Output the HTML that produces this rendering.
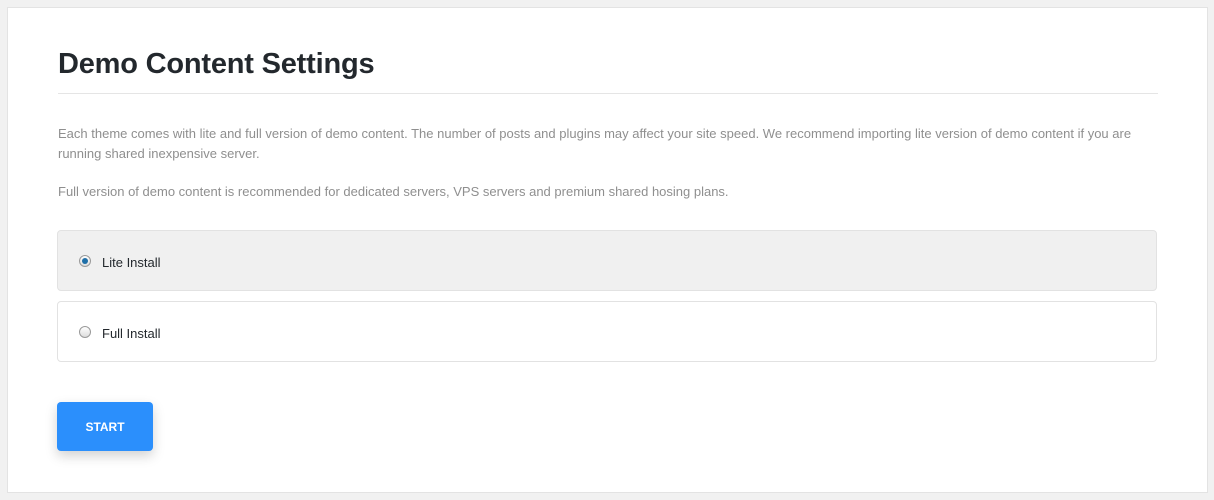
<!DOCTYPE html>
<html><head><style>
*{box-sizing:border-box;margin:0;padding:0}
body{width:1214px;height:500px;background:#f1f1f1;font-family:"Liberation Sans",sans-serif;position:relative;overflow:hidden}
.card{position:absolute;left:7px;top:7px;width:1201px;height:486px;background:#fff;border:1px solid #e3e3e3}
h1{position:absolute;left:50px;top:40px;font-size:29px;font-weight:bold;color:#23282d;letter-spacing:-0.2px}
.hr{position:absolute;left:50px;top:85px;width:1100px;height:1px;background:#e5e5e5}
p{position:absolute;left:50px;font-size:13px;color:#8f8f8f;line-height:20px;width:1100px}
.opt{position:absolute;left:49px;width:1100px;height:61px;border:1px solid #e2e2e2;border-radius:4px;font-size:13px;color:#23282d}
.opt span{position:absolute;left:44px;top:24px}
.r{position:absolute;left:21px;top:24px;width:12px;height:12px;border-radius:50%;border:1px solid #9a9a9a;background:linear-gradient(#fff,#ddd)}
.r.on::after{content:"";position:absolute;left:2px;top:2px;width:6px;height:6px;border-radius:50%;background:#1f6fa8}
.btn{position:absolute;left:49px;top:394px;width:96px;height:49px;background:#2b8ffc;border-radius:4px;color:#fff;font-weight:bold;font-size:12px;text-align:center;line-height:51px;box-shadow:0 5px 12px rgba(0,0,0,.18)}
</style></head><body>
<div class="card">
<h1>Demo Content Settings</h1>
<div class="hr"></div>
<p style="top:116px">Each theme comes with lite and full version of demo content. The number of posts and plugins may affect your site speed. We recommend importing lite version of demo content if you are running shared inexpensive server.</p>
<p style="top:174px">Full version of demo content is recommended for dedicated servers, VPS servers and premium shared hosing plans.</p>
<div class="opt" style="top:222px;background:#f0f0f0"><div class="r on"></div><span>Lite Install</span></div>
<div class="opt" style="top:293px"><div class="r"></div><span>Full Install</span></div>
<div class="btn">START</div>
</div>
</body></html>
